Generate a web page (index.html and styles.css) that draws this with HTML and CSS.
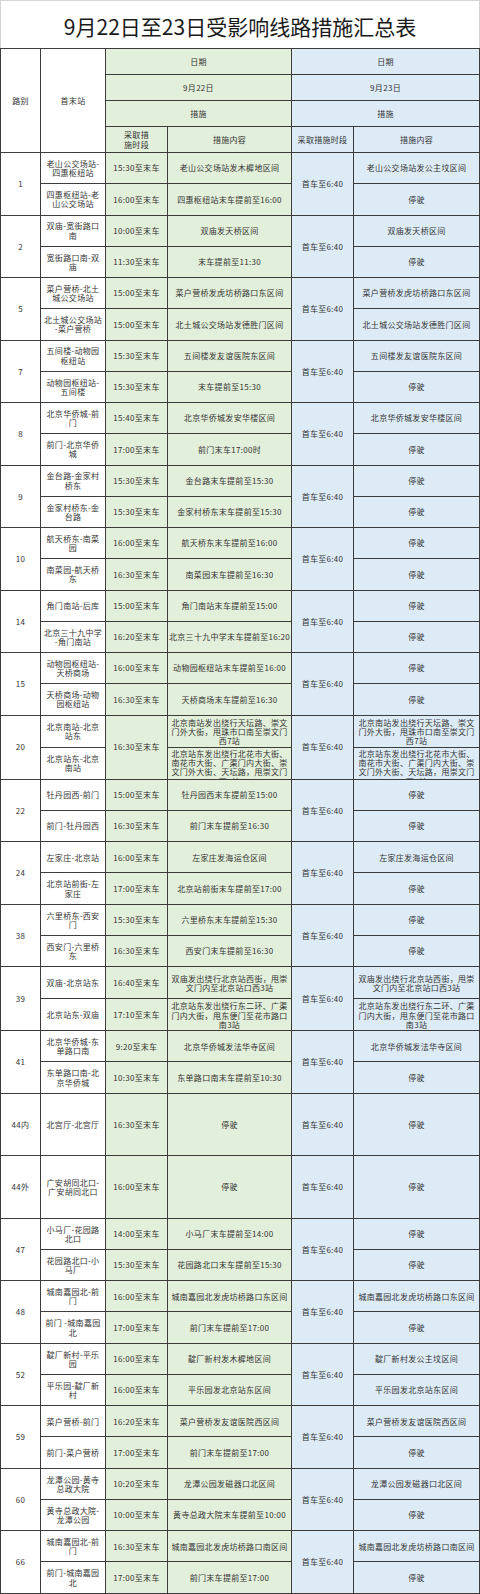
FILE: index.html
```html
<!DOCTYPE html>
<html lang="zh-CN">
<head>
<meta charset="utf-8">
<title>9月22日至23日受影响线路措施汇总表</title>
<link rel="stylesheet" href="styles.css">
</head>
<body>
<div class="page">
  <div class="title">9月22日至23日受影响线路措施汇总表</div>
  <table class="sheet">
    <colgroup>
      <col class="c1"><col class="c2"><col class="c3"><col class="c4"><col class="c5"><col class="c6">
    </colgroup>
    <thead>
      <tr class="h">
        <th rowspan="4" class="w">路别</th>
        <th rowspan="4" class="w">首末站</th>
        <th colspan="2" class="g">日期</th>
        <th colspan="2" class="b">日期</th>
      </tr>
      <tr class="h"><th colspan="2" class="g">9月22日</th><th colspan="2" class="b">9月23日</th></tr>
      <tr class="h"><th colspan="2" class="g">措施</th><th colspan="2" class="b">措施</th></tr>
      <tr class="h">
        <th class="g">采取措<br>施时段</th><th class="g">措施内容</th>
        <th class="b">采取措施时段</th><th class="b">措施内容</th>
      </tr>
    </thead>
    <tbody>
      <tr class="r"><td rowspan="2" class="w">1</td><td class="w">老山公交场站-<br>四惠枢纽站</td><td class="g">15:30至末车</td><td class="g">老山公交场站发木樨地区间</td><td rowspan="2" class="b">首车至6:40</td><td class="b">老山公交场站发公主坟区间</td></tr>
      <tr class="r"><td class="w">四惠枢纽站-老<br>山公交场站</td><td class="g">16:00至末车</td><td class="g">四惠枢纽站末车提前至16:00</td><td class="b">停驶</td></tr>

      <tr class="r"><td rowspan="2" class="w">2</td><td class="w">双庙-宽街路口<br>南</td><td class="g">10:00至末车</td><td class="g">双庙发天桥区间</td><td rowspan="2" class="b">首车至6:40</td><td class="b">双庙发天桥区间</td></tr>
      <tr class="r"><td class="w">宽街路口南-双<br>庙</td><td class="g">11:30至末车</td><td class="g">末车提前至11:30</td><td class="b">停驶</td></tr>

      <tr class="r"><td rowspan="2" class="w">5</td><td class="w">菜户营桥-北土<br>城公交场站</td><td class="g">15:00至末车</td><td class="g">菜户营桥发虎坊桥路口东区间</td><td rowspan="2" class="b">首车至6:40</td><td class="b">菜户营桥发虎坊桥路口东区间</td></tr>
      <tr class="r"><td class="w">北土城公交场站<br>-菜户营桥</td><td class="g">15:00至末车</td><td class="g">北土城公交场站发德胜门区间</td><td class="b">北土城公交场站发德胜门区间</td></tr>

      <tr class="r"><td rowspan="2" class="w">7</td><td class="w">五间楼-动物园<br>枢纽站</td><td class="g">15:30至末车</td><td class="g">五间楼发友谊医院东区间</td><td rowspan="2" class="b">首车至6:40</td><td class="b">五间楼发友谊医院东区间</td></tr>
      <tr class="r"><td class="w">动物园枢纽站-<br>五间楼</td><td class="g">15:30至末车</td><td class="g">末车提前至15:30</td><td class="b">停驶</td></tr>

      <tr class="r"><td rowspan="2" class="w">8</td><td class="w">北京华侨城-前<br>门</td><td class="g">15:40至末车</td><td class="g">北京华侨城发安华楼区间</td><td rowspan="2" class="b">首车至6:40</td><td class="b">北京华侨城发安华楼区间</td></tr>
      <tr class="r"><td class="w">前门-北京华侨<br>城</td><td class="g">17:00至末车</td><td class="g">前门末车17:00时</td><td class="b">停驶</td></tr>

      <tr class="r"><td rowspan="2" class="w">9</td><td class="w">金台路-金家村<br>桥东</td><td class="g">15:30至末车</td><td class="g">金台路末车提前至15:30</td><td rowspan="2" class="b">首车至6:40</td><td class="b">停驶</td></tr>
      <tr class="r"><td class="w">金家村桥东-金<br>台路</td><td class="g">15:30至末车</td><td class="g">金家村桥东末车提前至15:30</td><td class="b">停驶</td></tr>

      <tr class="r"><td rowspan="2" class="w">10</td><td class="w">航天桥东-南菜<br>园</td><td class="g">16:00至末车</td><td class="g">航天桥东末车提前至16:00</td><td rowspan="2" class="b">首车至6:40</td><td class="b">停驶</td></tr>
      <tr class="r"><td class="w">南菜园-航天桥<br>东</td><td class="g">16:30至末车</td><td class="g">南菜园末车提前至16:30</td><td class="b">停驶</td></tr>

      <tr class="r"><td rowspan="2" class="w">14</td><td class="w">角门南站-后库</td><td class="g">15:00至末车</td><td class="g">角门南站末车提前至15:00</td><td rowspan="2" class="b">首车至6:40</td><td class="b">停驶</td></tr>
      <tr class="r"><td class="w">北京三十九中学<br>-角门南站</td><td class="g">16:20至末车</td><td class="g">北京三十九中学末车提前至16:20</td><td class="b">停驶</td></tr>

      <tr class="r"><td rowspan="2" class="w">15</td><td class="w">动物园枢纽站-<br>天桥商场</td><td class="g">16:00至末车</td><td class="g">动物园枢纽站末车提前至16:00</td><td rowspan="2" class="b">首车至6:40</td><td class="b">停驶</td></tr>
      <tr class="r"><td class="w">天桥商场-动物<br>园枢纽站</td><td class="g">16:30至末车</td><td class="g">天桥商场末车提前至16:30</td><td class="b">停驶</td></tr>

      <tr class="r2"><td rowspan="2" class="w">20</td><td class="w">北京南站-北京<br>站东</td><td rowspan="2" class="g">16:30至末车</td><td class="g"><div class="clip"><span class="lines">北京南站发出绕行天坛路、崇文<br>门外大街，甩珠市口南至崇文门<br>西7站</span></div></td><td rowspan="2" class="b">首车至6:40</td><td class="b"><div class="clip"><span class="lines">北京南站发出绕行天坛路、崇文<br>门外大街，甩珠市口南至崇文门<br>西7站</span></div></td></tr>
      <tr class="r2"><td class="w">北京站东-北京<br>南站</td><td class="g"><div class="clip"><span class="lines">北京站东发出绕行北花市大街、<br>南花市大街、广渠门内大街、崇<br>文门外大街、天坛路，甩崇文门<br>西7站</span></div></td><td class="b"><div class="clip"><span class="lines">北京站东发出绕行北花市大街、<br>南花市大街、广渠门内大街、崇<br>文门外大街、天坛路，甩崇文门<br>西7站</span></div></td></tr>

      <tr class="r"><td rowspan="2" class="w">22</td><td class="w">牡丹园西-前门</td><td class="g">15:00至末车</td><td class="g">牡丹园西末车提前至15:00</td><td rowspan="2" class="b">首车至6:40</td><td class="b">停驶</td></tr>
      <tr class="r"><td class="w">前门-牡丹园西</td><td class="g">16:30至末车</td><td class="g">前门末车提前至16:30</td><td class="b">停驶</td></tr>

      <tr class="r"><td rowspan="2" class="w">24</td><td class="w">左家庄-北京站</td><td class="g">16:00至末车</td><td class="g">左家庄发海运仓区间</td><td rowspan="2" class="b">首车至6:40</td><td class="b">左家庄发海运仓区间</td></tr>
      <tr class="r"><td class="w">北京站前街-左<br>家庄</td><td class="g">17:00至末车</td><td class="g">北京站前街末车提前至17:00</td><td class="b">停驶</td></tr>

      <tr class="r"><td rowspan="2" class="w">38</td><td class="w">六里桥东-西安<br>门</td><td class="g">15:30至末车</td><td class="g">六里桥东末车提前至15:30</td><td rowspan="2" class="b">首车至6:40</td><td class="b">停驶</td></tr>
      <tr class="r"><td class="w">西安门-六里桥<br>东</td><td class="g">16:30至末车</td><td class="g">西安门末车提前至16:30</td><td class="b">停驶</td></tr>

      <tr class="r"><td rowspan="2" class="w">39</td><td class="w">双庙-北京站东</td><td class="g">16:40至末车</td><td class="g"><div class="clip"><span class="lines">双庙发出绕行北京站西街，甩崇<br>文门内至北京站口西3站</span></div></td><td rowspan="2" class="b">首车至6:40</td><td class="b"><div class="clip"><span class="lines">双庙发出绕行北京站西街，甩崇<br>文门内至北京站口西3站</span></div></td></tr>
      <tr class="r"><td class="w">北京站东-双庙</td><td class="g">17:10至末车</td><td class="g"><div class="clip"><span class="lines">北京站东发出绕行东二环、广渠<br>门内大街，甩东便门至花市路口<br>南3站</span></div></td><td class="b"><div class="clip"><span class="lines">北京站东发出绕行东二环、广渠<br>门内大街，甩东便门至花市路口<br>南3站</span></div></td></tr>

      <tr class="r"><td rowspan="2" class="w">41</td><td class="w">北京华侨城-东<br>单路口南</td><td class="g">9:20至末车</td><td class="g">北京华侨城发法华寺区间</td><td rowspan="2" class="b">首车至6:40</td><td class="b">北京华侨城发法华寺区间</td></tr>
      <tr class="r"><td class="w">东单路口南-北<br>京华侨城</td><td class="g">10:30至末车</td><td class="g">东单路口南末车提前至10:30</td><td class="b">停驶</td></tr>

      <tr class="rd"><td class="w">44内</td><td class="w">北宫厅-北宫厅</td><td class="g">16:30至末车</td><td class="g">停驶</td><td class="b">首车至6:40</td><td class="b">停驶</td></tr>
      <tr class="rd"><td class="w">44外</td><td class="w">广安胡同北口-<br>广安胡同北口</td><td class="g">16:00至末车</td><td class="g">停驶</td><td class="b">首车至6:40</td><td class="b">停驶</td></tr>

      <tr class="r"><td rowspan="2" class="w">47</td><td class="w">小马厂-花园路<br>北口</td><td class="g">14:00至末车</td><td class="g">小马厂末车提前至14:00</td><td rowspan="2" class="b">首车至6:40</td><td class="b">停驶</td></tr>
      <tr class="r"><td class="w">花园路北口-小<br>马厂</td><td class="g">15:30至末车</td><td class="g">花园路北口末车提前至15:30</td><td class="b">停驶</td></tr>

      <tr class="r"><td rowspan="2" class="w">48</td><td class="w">城南嘉园北-前<br>门</td><td class="g">16:00至末车</td><td class="g">城南嘉园北发虎坊桥路口东区间</td><td rowspan="2" class="b">首车至6:40</td><td class="b">城南嘉园北发虎坊桥路口东区间</td></tr>
      <tr class="r"><td class="w">前门 -城南嘉园<br>北</td><td class="g">17:00至末车</td><td class="g">前门末车提前至17:00</td><td class="b">停驶</td></tr>

      <tr class="r"><td rowspan="2" class="w">52</td><td class="w">靛厂新村-平乐<br>园</td><td class="g">16:00至末车</td><td class="g">靛厂新村发木樨地区间</td><td rowspan="2" class="b">首车至6:40</td><td class="b">靛厂新村发公主坟区间</td></tr>
      <tr class="r"><td class="w">平乐园-靛厂新<br>村</td><td class="g">16:00至末车</td><td class="g">平乐园发北京站东区间</td><td class="b">平乐园发北京站东区间</td></tr>

      <tr class="r"><td rowspan="2" class="w">59</td><td class="w">菜户营桥-前门</td><td class="g">16:20至末车</td><td class="g">菜户营桥发友谊医院西区间</td><td rowspan="2" class="b">首车至6:40</td><td class="b">菜户营桥发友谊医院西区间</td></tr>
      <tr class="r"><td class="w">前门-菜户营桥</td><td class="g">17:00至末车</td><td class="g">前门末车提前至17:00</td><td class="b">停驶</td></tr>

      <tr class="r"><td rowspan="2" class="w">60</td><td class="w">龙潭公园-黄寺<br>总政大院</td><td class="g">10:20至末车</td><td class="g">龙潭公园发磁器口北区间</td><td rowspan="2" class="b">首车至6:40</td><td class="b">龙潭公园发磁器口北区间</td></tr>
      <tr class="r"><td class="w">黄寺总政大院-<br>龙潭公园</td><td class="g">10:00至末车</td><td class="g">黄寺总政大院末车提前至10:00</td><td class="b">停驶</td></tr>

      <tr class="r"><td rowspan="2" class="w">66</td><td class="w">城南嘉园北-前<br>门</td><td class="g">16:30至末车</td><td class="g">城南嘉园北发虎坊桥路口南区间</td><td rowspan="2" class="b">首车至6:40</td><td class="b">城南嘉园北发虎坊桥路口南区间</td></tr>
      <tr class="r"><td class="w">前门-城南嘉园<br>北</td><td class="g">17:00至末车</td><td class="g">前门末车提前至17:00</td><td class="b">停驶</td></tr>
    </tbody>
  </table>
</div>
</body>
</html>
```
FILE: styles.css
```css
html, body {
  margin: 0;
  padding: 0;
  background: #ffffff;
}

.page {
  width: 480px;
  font-family: "Noto Sans CJK SC", "Noto Sans", sans-serif;
  color: #333333;
}

.title {
  height: 48px;
  border: 1px solid #d4d4d4;
  border-bottom: none;
  box-sizing: border-box;
  display: flex;
  align-items: center;
  justify-content: center;
  font-size: 21px;
  letter-spacing: 0;
  color: #1a1a1a;
  padding-top: 2px;
}

.sheet {
  border-collapse: collapse;
  table-layout: fixed;
  width: 479px;
  font-size: 8px;
  line-height: 9.3px;
  letter-spacing: 0.3px;
}

.c1 { width: 40px; }
.c2 { width: 65px; }
.c3 { width: 62px; }
.c4 { width: 124px; }
.c5 { width: 62px; }
.c6 { width: 126px; }

.sheet th,
.sheet td {
  border: 1px solid #3c3c3c;
  padding: 0 1px;
  text-align: center;
  vertical-align: middle;
  font-weight: normal;
  white-space: nowrap;
  overflow: hidden;
}

.sheet .w { background: #ffffff; }
.sheet .g { background: #e2efda; }
.sheet .b { background: #ddebf7; }

.sheet tr.h { height: 26px; }
.sheet tr.r { height: 31.25px; }
.sheet tr.r2 { height: 32.1px; }
.sheet tr.rd { height: 62.5px; }

.clip {
  height: 31px;
  overflow: hidden;
  display: flex;
  flex-direction: column;
}

.lines {
  margin: auto 0;
  padding-top: 1px;
}
```
